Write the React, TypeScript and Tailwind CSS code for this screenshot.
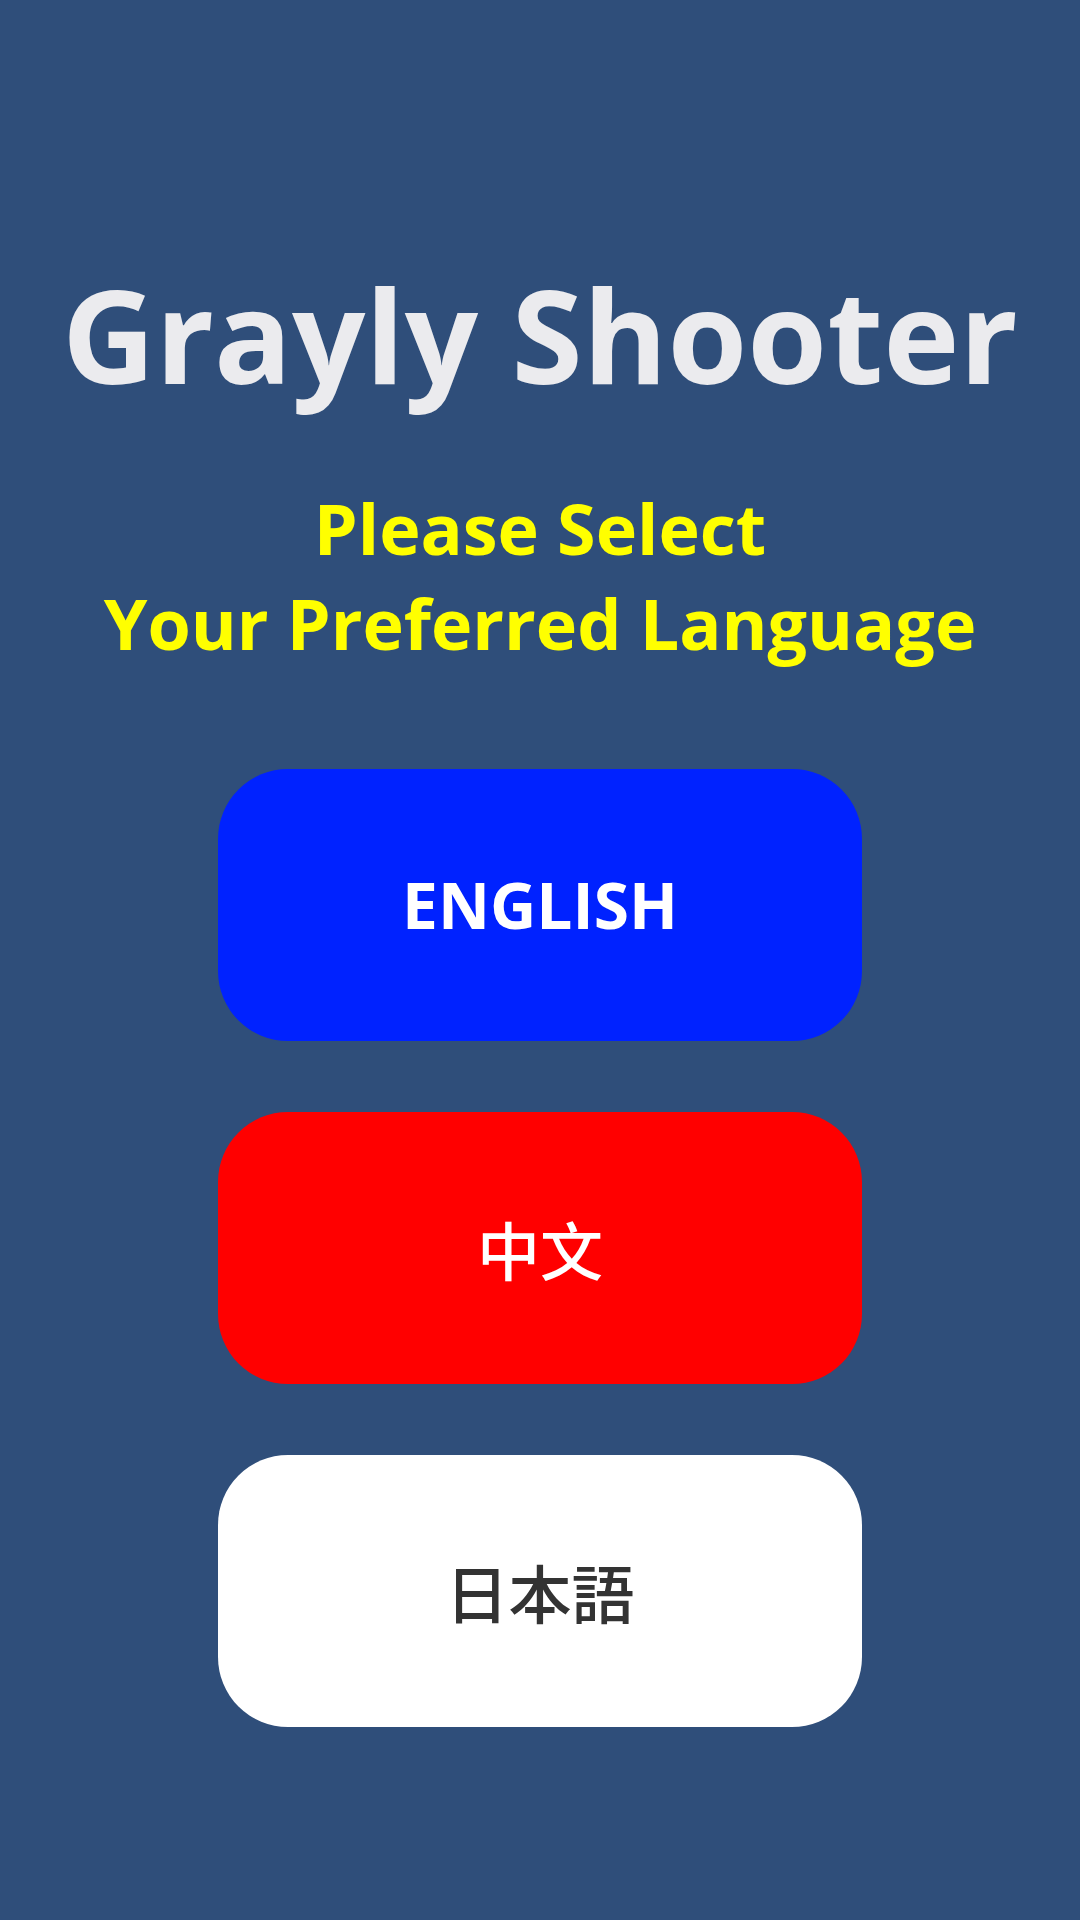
import React from "react";

export default function App() {
  return (
    <div
      className="w-[1080px] h-[1920px] bg-[#2f4e7a] flex flex-col items-center"
      style={{ fontFamily: '"Open Sans", "Noto Sans", sans-serif' }}
    >
      <h1 className="mt-[269px] text-[129px] leading-[130px] font-bold text-[#ebebee] whitespace-nowrap">
        Grayly Shooter
      </h1>
      <div className="mt-[82px] text-[70px] leading-[95px] font-bold text-[#ffff00] text-center whitespace-nowrap">
        <div>Please Select</div>
        <div>Your Preferred Language</div>
      </div>
      <div className="mt-[98px] flex flex-col gap-[71px]">
        <button className="w-[644px] h-[272px] rounded-[70px] bg-[#0022ff] flex items-center justify-center text-white text-[64px] font-bold">
          ENGLISH
        </button>
        <button
          className="w-[644px] h-[272px] rounded-[70px] bg-[#ff0000] flex items-center justify-center text-white text-[63px] font-medium"
          style={{ fontFamily: '"Noto Sans CJK SC", sans-serif' }}
        >
          中文
        </button>
        <button
          className="w-[644px] h-[272px] rounded-[70px] bg-white flex items-center justify-center text-[#333333] text-[63px] font-medium"
          style={{ fontFamily: '"Noto Sans CJK JP", sans-serif' }}
        >
          日本語
        </button>
      </div>
    </div>
  );
}
